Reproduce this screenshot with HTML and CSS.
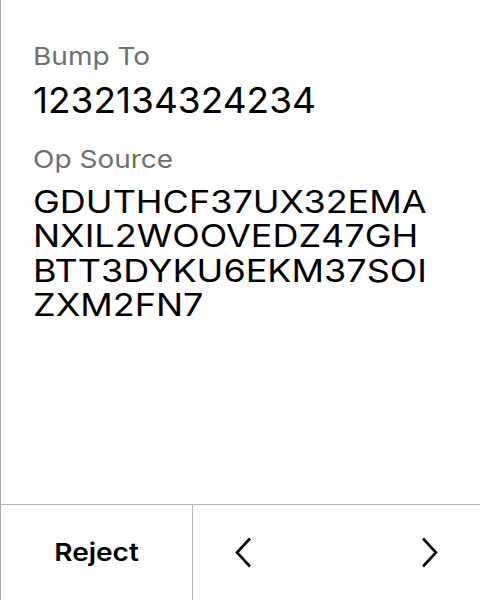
FILE: index.html
```html
<!DOCTYPE html>
<html lang="en">
<head>
<meta charset="utf-8">
<title>Review</title>
<link rel="stylesheet" href="styles.css">
</head>
<body>
<div class="screen">
  <main class="content">
    <div class="pair">
      <div class="tag">Bump To</div>
      <div class="value big">1232134324234</div>
    </div>
    <div class="pair">
      <div class="tag">Op Source</div>
      <div class="value">GDUTHCF37UX32EMA<br>NXIL2WOOVEDZ47GH<br>BTT3DYKU6EKM37SOI<br>ZXM2FN7</div>
    </div>
  </main>
  <footer class="footer">
    <button class="reject"><span class="reject-label">Reject</span></button>
    <div class="nav">
      <svg class="chev" width="16" height="31" viewBox="0 0 16 31"><path d="M15 1.5 L2 15.5 L15 29.5" fill="none" stroke="#000" stroke-width="2.6"/></svg>
      <svg class="chev" width="16" height="31" viewBox="0 0 16 31"><path d="M1 1.5 L14 15.5 L1 29.5" fill="none" stroke="#000" stroke-width="2.6"/></svg>
    </div>
  </footer>
</div>
</body>
</html>
```
FILE: styles.css
```css
html, body {
  margin: 0;
  padding: 0;
  background: #fff;
}
body {
  font-family: Inter, "Noto Sans", sans-serif;
  color: #000;
}
.screen {
  width: 479px;
  height: 600px;
  border-left: 1px solid #a8a8a8;
  display: flex;
  flex-direction: column;
  overflow: hidden;
}
.content {
  flex: 1;
  min-height: 0;
  padding: 42px 20px 0 32px;
}
.pair {
  margin-bottom: 22.7px;
}
.tag {
  font-size: 28px;
  line-height: 32px;
  color: #6f6f6f;
  transform: scaleY(0.884);
  transform-origin: 0 0;
}
.value {
  font-size: 36px;
  line-height: 39px;
  margin-top: 8.1px;
  white-space: nowrap;
  transform: scaleY(0.88);
  transform-origin: 0 0;
}
.value.big {
  font-size: 37px;
  line-height: 44px;
  margin-top: 4.6px;
  transform: scaleY(0.96);
}
.footer {
  flex: 0 0 95px;
  border-top: 1px solid #b5b5b5;
  display: flex;
}
.reject {
  width: 192px;
  border: none;
  border-right: 1px solid #b5b5b5;
  background: #fff;
  font-family: Inter, "Noto Sans", sans-serif;
  font-weight: 600;
  font-size: 28px;
  color: #000;
  padding: 0 0 2px 0;
}
.reject-label {
  display: inline-block;
  transform: scaleY(0.87);
}
.nav {
  flex: 1;
  display: flex;
  justify-content: space-between;
  align-items: center;
  padding: 0 42px 0 42px;
}
.chev {
  display: block;
}
```
